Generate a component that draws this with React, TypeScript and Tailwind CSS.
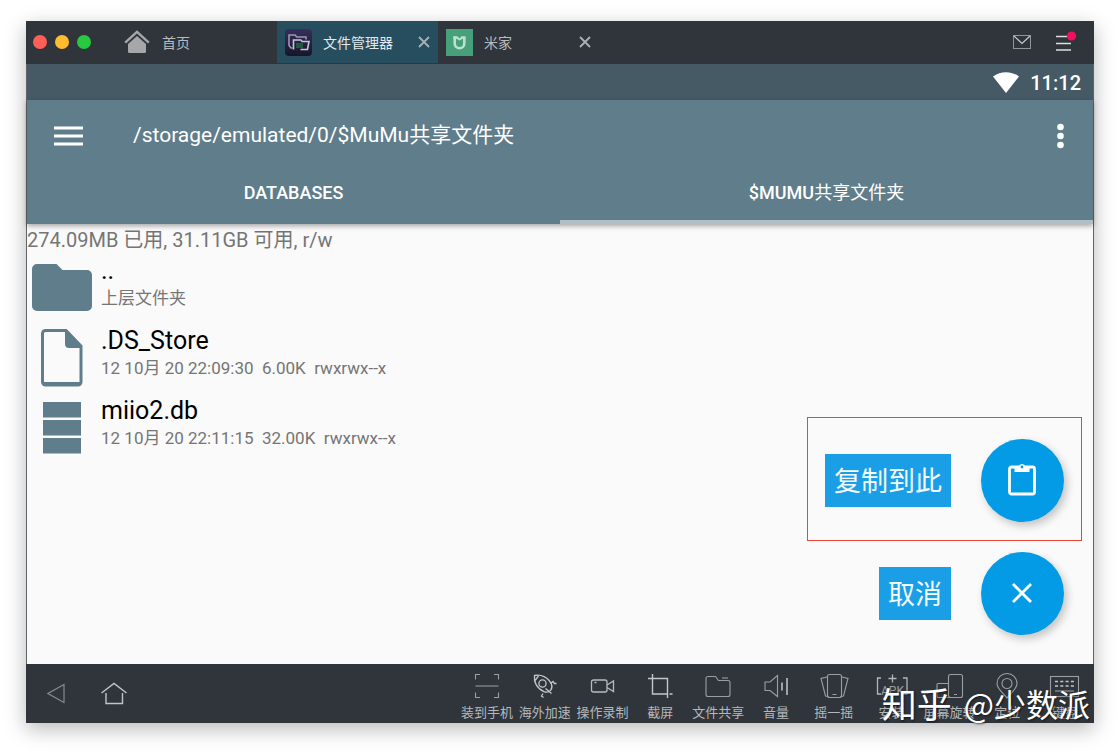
import React from "react";

const latin = "font-[Roboto,'Noto_Sans_CJK_SC',sans-serif]";

function HomeSolid() {
  return (
    <svg width="26" height="24" viewBox="0 0 26 24" aria-hidden="true">
      <path d="M1.2 12.6 13 1.8l11.8 10.8" fill="none" stroke="#a5a7a9" strokeWidth="2.4" />
      <path d="M13 6 22 14v7.500a1.500 1.500 0 0 1-1.500 1.500h-15A1.500 1.500 0 0 1 4 21.500V14z" fill="#a5a7a9" />
    </svg>
  );
}

function FolderApp() {
  return (
    <svg width="27" height="27" viewBox="0 0 27 27" aria-hidden="true">
      <defs>
        <linearGradient id="folderApp" x1="0" y1="0" x2="0" y2="1">
          <stop offset="0" stopColor="#35305a" />
          <stop offset="1" stopColor="#17152a" />
        </linearGradient>
      </defs>
      <rect width="27" height="27" rx="4" fill="url(#folderApp)" />
      <rect x="11" y="14" width="7" height="5" fill="#1f5a3c" />
      <path d="M7.500 19H6L4 16.500V6h6l1.800 2H21v2.500" fill="none" stroke="#9d96b3" strokeWidth="1.600" />
      <path d="M8.500 20.500V11h7.300l1.400 1.500H24L22.500 20.500H15.500" fill="none" stroke="#c9c3d6" strokeWidth="1.600" />
    </svg>
  );
}

function MiHome() {
  return (
    <svg width="27" height="27" viewBox="0 0 27 27" aria-hidden="true">
      <rect width="27" height="27" fill="#46a079" />
      <path d="M8.700 7.500v7a4.800 4.800 0 0 0 9.600 0V8.500" fill="none" stroke="#bfe0d0" strokeWidth="2.600" />
      <path d="M7.400 7.200h4l2.100 2.300 2.100-2.300h4v2.600h-3l-3.100 1.700-3.100-1.700h-3z" fill="#bfe0d0" />
    </svg>
  );
}

function CloseMark() {
  return (
    <svg width="12" height="12" viewBox="0 0 12 12" aria-hidden="true">
      <path d="m1 1 10 10M11 1 1 11" stroke="#a9b1b6" strokeWidth="1.800" />
    </svg>
  );
}

function TitleBar() {
  return (
    <header className="flex h-[43px] shrink-0 items-stretch bg-[#2f353b] pb-px font-['Noto_Sans_CJK_SC',sans-serif] text-sm text-[#b9bcbf]">
      <div className="flex w-[251px] items-center">
        <div className="flex gap-2 pl-[7px]">
          <button aria-label="关闭" className="size-[14px] rounded-full bg-[#ff5f57]" />
          <button aria-label="最小化" className="size-[14px] rounded-full bg-[#febc2e]" />
          <button aria-label="最大化" className="size-[14px] rounded-full bg-[#28c840]" />
        </div>
        <button className="ml-[33px] flex items-center gap-3">
          <HomeSolid />
          <span>首页</span>
        </button>
      </div>
      <div className="flex w-[161px] items-center bg-[#264e5f] px-2 text-[#e3e9ec]">
        <button className="flex items-center gap-[11px]">
          <FolderApp />
          <span>文件管理器</span>
        </button>
        <button aria-label="关闭文件管理器" className="ml-auto">
          <CloseMark />
        </button>
      </div>
      <div className="flex w-[161px] items-center px-2">
        <button className="flex items-center gap-[11px]">
          <MiHome />
          <span>米家</span>
        </button>
        <button aria-label="关闭米家" className="ml-auto">
          <CloseMark />
        </button>
      </div>
      <div className="ml-auto flex items-center gap-[25px] pr-[18px]">
        <button aria-label="消息">
          <svg width="18" height="14" viewBox="0 0 18 14" fill="none" aria-hidden="true">
            <rect x=".5" y=".5" width="17" height="13" stroke="#91959a" />
            <path d="m1 1 8 7.500L17 1" stroke="#c9cccf" strokeWidth="1.200" />
          </svg>
        </button>
        <button aria-label="菜单">
          <svg width="20" height="22" viewBox="0 0 20 22" aria-hidden="true">
            <path d="M0 5.500h15M0 12.500h15M0 19h15" stroke="#dcdee0" strokeWidth="1.500" />
            <circle cx="15.500" cy="5" r="4.600" fill="#f70d5c" />
          </svg>
        </button>
      </div>
    </header>
  );
}

function FolderIcon() {
  return (
    <svg width="60" height="48" viewBox="0 0 60 48" fill="#607d8b" aria-hidden="true">
      <path d="M5 0h19.500l6 6H55a5 5 0 0 1 5 5v31a5 5 0 0 1-5 5H5a5 5 0 0 1-5-5V5a5 5 0 0 1 5-5z" />
    </svg>
  );
}

function PageIcon() {
  return (
    <svg width="42" height="58" viewBox="0 0 42 58" aria-hidden="true">
      <path d="M4.500 1.500H25L40 17v36a3 3 0 0 1-3 3H4.500a3 3 0 0 1-3-3v-48.500a3 3 0 0 1 3-3z" fill="none" stroke="#607d8b" strokeWidth="3" />
      <path d="M24 1h2l15 16v2H28a4 4 0 0 1-4-4z" fill="#607d8b" />
      <path d="M2 54.500h38" stroke="#607d8b" strokeWidth="3" />
    </svg>
  );
}

function DatabaseIcon() {
  return (
    <svg width="38" height="52" viewBox="0 0 38 52" fill="#607d8b" aria-hidden="true">
      <path d="M0 0h38v15.500H0zM0 18h38v15.500H0zM0 36h38v15.500H0z" />
    </svg>
  );
}

const files = [
  { name: "..", detail: "上层文件夹", icon: <FolderIcon /> },
  { name: ".DS_Store", detail: "12 10月 20 22:09:30  6.00K  rwxrwx--x", icon: <PageIcon /> },
  { name: "miio2.db", detail: "12 10月 20 22:11:15  32.00K  rwxrwx--x", icon: <DatabaseIcon /> },
];

function FloatingAction({ id, label, children }: { id: string; label: string; children: React.ReactNode }) {
  return (
    <div className="flex items-center gap-[30px]">
      <label htmlFor={id} className="bg-[#1a9fe6] px-[9px] pt-1 text-[27px] leading-[49px] text-[#f4fbff]">
        {label}
      </label>
      <button id={id} className="flex size-[83px] items-center justify-center rounded-full bg-[#039be5] pr-[2px] pb-[2px] shadow-[3px_4px_8px_rgba(0,0,0,0.22)]">
        {children}
      </button>
    </div>
  );
}

function ToolIcon({ children }: { children: React.ReactNode }) {
  return (
    <svg width="32" height="28" viewBox="0 0 32 28" fill="none" stroke="#9a9fa4" strokeWidth="1.100" aria-hidden="true">
      {children}
    </svg>
  );
}

const tools = [
  {
    label: "装到手机",
    icon: <path d="M4.500 7.500V2.500H9M23 2.500h4.500v5M4.500 20.500v5H9M23 25.500h4.500v-5M4.500 14h23" />,
  },
  {
    label: "海外加速",
    icon: (
      <g stroke="#c4c7ca" strokeWidth="1.300">
        <path d="M5.500 3.500C12 2.200 19 5 22.500 12.200c.8 2.200.4 4.500-.9 6.200-1.800 1.700-4.300 2.200-6.600 1.300C8 16.500 4.500 10 5.500 3.500z" />
        <circle cx="13.500" cy="11.500" r="3.600" />
        <path d="M6 8.500 9.500 4M21.500 11.500 24 9.500l1.500 2h2M14 21.500l-1.500 2.500 2 1.500M16.500 16.500l6 5" />
      </g>
    ),
  },
  {
    label: "操作录制",
    icon: (
      <g stroke="#b7babd" strokeWidth="1.300">
        <rect x="4.500" y="8" width="15.500" height="12" rx="2" />
        <path d="m20 13 6.500-4v10.500L20 15.500M7.500 10.500h2" />
      </g>
    ),
  },
  {
    label: "截屏",
    icon: <path d="M8.500 2v20H24M4 6.500h19.500V26M25.500 22h3" stroke="#c4c7ca" strokeWidth="1.400" />,
  },
  {
    label: "文件共享",
    icon: (
      <>
        <path d="M6 4.500h7.500l3 4H26a2 2 0 0 1 2 2v12a2 2 0 0 1-2 2H6a2 2 0 0 1-2-2v-16a2 2 0 0 1 2-2z" />
        <path d="M20 6h6" />
      </>
    ),
  },
  {
    label: "音量",
    icon: (
      <>
        <path d="M5 10h5l7.500-6.500v21L10 18.500H5z" />
        <path d="M22 10.500v8M27 6v17" stroke="#c4c7ca" strokeWidth="1.500" />
      </>
    ),
  },
  {
    label: "摇一摇",
    icon: (
      <>
        <rect x="9.500" y="2.500" width="14" height="23" rx="2" />
        <path d="m9 5-6 1.500L7.500 24l3 .5M24 5l6 1.500L25.500 24l-3 .5M14.500 22.500h4" />
      </>
    ),
  },
  {
    label: "安装",
    icon: (
      <>
        <path d="M5 6H1.500v16H5M27 6h4v16h-4M16.500 2.500v8M12.500 6.500h8" stroke="#b2b6ba" strokeWidth="1.300" />
        <text x="16.500" y="23" textAnchor="middle" fontSize="12" fontFamily="Roboto, sans-serif" fill="#9a9fa4" stroke="none">
          APK
        </text>
      </>
    ),
  },
  {
    label: "屏幕旋转",
    icon: (
      <>
        <rect x="15.500" y="2.500" width="14" height="23" rx="2" />
        <path d="M15 11.500H5a1 1 0 0 0-1 1v12a1 1 0 0 0 1 1h11M21 22.500h3" />
      </>
    ),
  },
  {
    label: "定位",
    icon: (
      <>
        <path d="M16 26C12 20.500 6 17 6 11.500a10 10 0 0 1 20 0C26 17 20 20.500 16 26z" />
        <circle cx="16" cy="11.500" r="5" />
      </>
    ),
  },
  {
    label: "键盘",
    icon: (
      <>
        <rect x="1.500" y="4.500" width="28" height="20" />
        <path d="M6 9.500h19M6 14h19" strokeDasharray="3 2.300" stroke="#c4c7ca" strokeWidth="1.400" />
        <path d="M6 19h19" />
      </>
    ),
  },
];

function Dock() {
  return (
    <footer className="relative flex h-[59px] shrink-0 items-start justify-between bg-[#2f353b]">
      <div className="flex items-center gap-9 pt-[17px] pl-[21px]">
        <button aria-label="返回">
          <svg width="18" height="24" viewBox="0 0 18 24" fill="none" aria-hidden="true">
            <path d="M17 3.500v18L1 12.500z" stroke="#85898e" strokeWidth="1.200" />
          </svg>
        </button>
        <button aria-label="主页">
          <svg width="26" height="24" viewBox="0 0 26 24" fill="none" stroke="#c1c4c7" strokeWidth="1.400" aria-hidden="true">
            <path d="M.5 12 13 2.500 25.500 12M5 12v10.500h16.500V12" />
          </svg>
        </button>
      </div>
      <nav className="flex w-[636px]">
        {tools.map((tool) => (
          <button
            key={tool.label}
            className="flex min-w-0 flex-1 flex-col items-center gap-1 pt-2 font-['Noto_Sans_CJK_SC',sans-serif] text-[13px] leading-4 whitespace-nowrap text-[#b5b8bb]"
          >
            <ToolIcon>{tool.icon}</ToolIcon>
            <span>{tool.label}</span>
          </button>
        ))}
      </nav>
      <div className="pointer-events-none absolute right-1 bottom-[2px] flex items-center gap-3 font-['Noto_Sans_CJK_SC',sans-serif] leading-9 text-white [text-shadow:1px_1px_2px_rgba(0,0,0,0.6)]">
        <span className="text-[35px]">知乎</span>
        <span className="text-[32px]">@少数派</span>
      </div>
    </footer>
  );
}

export default function App() {
  return (
    <div className="flex min-h-screen flex-col bg-white px-[26px] pt-[21px] pb-[30px]">
      <div className="flex flex-1 flex-col shadow-[0_6px_20px_rgba(0,0,0,0.28)]">
        <TitleBar />
        <div className={`flex flex-1 flex-col border-x border-[#5f6468] bg-[#fafafa] ${latin}`}>
          <div className="flex h-9 items-center justify-end gap-[11px] bg-[#455a64] pt-px pr-3 text-xl font-medium text-white">
            <svg width="26" height="21" viewBox="0 0 26 21" fill="#fff" aria-hidden="true">
              <path d="M13 21 0 4.500C7.500-1.300 18.500-1.300 26 4.500z" />
            </svg>
            <span>11:12</span>
          </div>
          <div className="z-10 bg-[#607d8b] text-white shadow-[0_2px_5px_rgba(0,0,0,0.35)]">
            <div className="flex h-[72px] items-center px-[27px]">
              <button aria-label="打开导航">
                <svg width="29" height="20" viewBox="0 0 29 20" aria-hidden="true">
                  <path d="M0 2h29M0 10h29M0 18h29" stroke="#fff" strokeWidth="3" />
                </svg>
              </button>
              <h1 className="ml-[50px] text-[21px]">/storage/emulated/0/$MuMu共享文件夹</h1>
              <button aria-label="更多选项" className="ml-auto">
                <svg width="12" height="26" viewBox="0 0 12 26" fill="#fff" aria-hidden="true">
                  <circle cx="6.500" cy="4" r="3.300" />
                  <circle cx="6.500" cy="13" r="3.300" />
                  <circle cx="6.500" cy="22" r="3.300" />
                </svg>
              </button>
            </div>
            <div className="grid h-[52px] grid-cols-2 text-[18px] font-medium" role="tablist">
              <button role="tab" aria-selected="false" className="border-b-4 border-transparent pb-2">
                DATABASES
              </button>
              <button role="tab" aria-selected="true" className="border-b-4 border-[#b0bec5] pb-2">
                $MUMU<span className="font-normal">共享文件夹</span>
              </button>
            </div>
          </div>
          <main className="relative flex-1">
            <p className="h-[29px] text-[20px] leading-8 text-[#757575]">274.09MB 已用, 31.11GB 可用, r/w</p>
            <ul>
              {files.map((file) => (
                <li key={file.name} className="flex h-[70px] items-center">
                  <div className="flex w-[74px] justify-center pr-1">{file.icon}</div>
                  <div className="pb-2">
                    <div className="text-[25px] leading-7 text-black">{file.name}</div>
                    <div className="text-[17px] leading-[26px] whitespace-pre text-[#757575]">{file.detail}</div>
                  </div>
                </li>
              ))}
            </ul>
            <div className="absolute right-[11px] bottom-[29px] flex flex-col items-end gap-[11px]">
              <div className="border border-[#ee4438] px-[17px] pt-[21px] pb-[18px]">
                <FloatingAction id="paste" label="复制到此">
                  <svg width="28" height="34" viewBox="0 1 28 34" fill="none" aria-hidden="true">
                    <path d="M3.500 5h21a2 2 0 0 1 2 2v23a2 2 0 0 1-2 2h-21a2 2 0 0 1-2-2V7a2 2 0 0 1 2-2z" stroke="#fff" strokeWidth="2.800" />
                    <path d="M6.500 4.500h4a3.700 3.700 0 0 1 7 0h4V10h-15z" fill="#fff" />
                    <circle cx="14" cy="5" r="1.400" fill="#039be5" />
                  </svg>
                </FloatingAction>
              </div>
              <div className="pr-[18px]">
                <FloatingAction id="cancel" label="取消">
                  <svg width="22" height="22" viewBox="0 0 22 22" aria-hidden="true">
                    <path d="m2 2 18 18M20 2 2 20" stroke="#fff" strokeWidth="2.800" />
                  </svg>
                </FloatingAction>
              </div>
            </div>
          </main>
        </div>
        <Dock />
      </div>
    </div>
  );
}
